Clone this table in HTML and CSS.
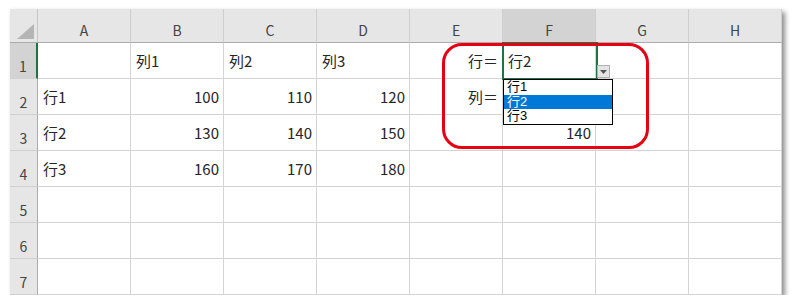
FILE: index.html
```html
<!DOCTYPE html>
<html lang="ja">
<head>
<meta charset="utf-8">
<title>ドロップダウンリスト</title>
<link rel="stylesheet" href="styles.css">
</head>
<body>
<div class="page">
  <div class="sheet">
    <div class="grid">
      <div class="corner"><span class="corner-tri"></span></div>
      <div class="colhead">A</div>
      <div class="colhead">B</div>
      <div class="colhead">C</div>
      <div class="colhead">D</div>
      <div class="colhead">E</div>
      <div class="colhead active">F</div>
      <div class="colhead">G</div>
      <div class="colhead">H</div>

      <div class="rowhead active">1</div>
      <div class="cell"></div>
      <div class="cell">列1</div>
      <div class="cell">列2</div>
      <div class="cell">列3</div>
      <div class="cell num">行＝</div>
      <div class="cell">行2</div>
      <div class="cell"></div>
      <div class="cell"></div>

      <div class="rowhead">2</div>
      <div class="cell">行1</div>
      <div class="cell num">100</div>
      <div class="cell num">110</div>
      <div class="cell num">120</div>
      <div class="cell num">列＝</div>
      <div class="cell"></div>
      <div class="cell"></div>
      <div class="cell"></div>

      <div class="rowhead">3</div>
      <div class="cell">行2</div>
      <div class="cell num">130</div>
      <div class="cell num">140</div>
      <div class="cell num">150</div>
      <div class="cell"></div>
      <div class="cell num">140</div>
      <div class="cell"></div>
      <div class="cell"></div>

      <div class="rowhead">4</div>
      <div class="cell">行3</div>
      <div class="cell num">160</div>
      <div class="cell num">170</div>
      <div class="cell num">180</div>
      <div class="cell"></div>
      <div class="cell"></div>
      <div class="cell"></div>
      <div class="cell"></div>

      <div class="rowhead">5</div>
      <div class="cell"></div><div class="cell"></div><div class="cell"></div><div class="cell"></div>
      <div class="cell"></div><div class="cell"></div><div class="cell"></div><div class="cell"></div>

      <div class="rowhead">6</div>
      <div class="cell"></div><div class="cell"></div><div class="cell"></div><div class="cell"></div>
      <div class="cell"></div><div class="cell"></div><div class="cell"></div><div class="cell"></div>

      <div class="rowhead">7</div>
      <div class="cell"></div><div class="cell"></div><div class="cell"></div><div class="cell"></div>
      <div class="cell"></div><div class="cell"></div><div class="cell"></div><div class="cell"></div>
    </div>

    <!-- active cell F1 -->
    <div class="selection"></div>
    <!-- highlight around the lookup cells -->
    <div class="callout"></div>
    <!-- in-cell dropdown -->
    <div class="dd-button">
      <svg width="7" height="4" viewBox="0 0 7 4"><path d="M0 0H7L3.5 4Z" fill="#555"/></svg>
    </div>
    <ul class="dd-list">
      <li>行1</li>
      <li class="selected">行2</li>
      <li>行3</li>
    </ul>
  </div>
</div>
</body>
</html>
```

FILE: styles.css
```css
* {
  box-sizing: border-box;
}

html, body {
  margin: 0;
  padding: 0;
  background: #ffffff;
}

.page {
  padding: 9px 0 0 10px;
  font-family: "Noto Sans CJK JP", "Noto Sans", sans-serif;
  color: #262626;
}

.sheet {
  position: relative;
  width: 772px;
  height: 286px;
  box-shadow: 3px 3px 5px rgba(0, 0, 0, 0.45);
  background: #fff;
}

.grid {
  display: grid;
  grid-template-columns: 28px repeat(8, 93px);
  grid-template-rows: 34px repeat(7, 36px);
}

.corner {
  background: #e6e6e6;
  border-right: 1px solid #c6c6c6;
  border-bottom: 1px solid #ababab;
  position: relative;
}

.corner-tri {
  position: absolute;
  right: 3px;
  bottom: 3px;
  width: 0;
  height: 0;
  border-left: 17px solid transparent;
  border-bottom: 15px solid #b5b5b5;
}

.colhead {
  background: #e6e6e6;
  border-right: 1px solid #cfcfcf;
  border-bottom: 1px solid #ababab;
  display: flex;
  align-items: center;
  justify-content: center;
  padding-top: 9px;
  font-size: 14px;
  color: #444;
}

.colhead.active {
  background: #d3d3d3;
}

.rowhead {
  background: #e6e6e6;
  border-right: 1px solid #ababab;
  border-bottom: 1px solid #d0d0d0;
  display: flex;
  align-items: flex-end;
  justify-content: center;
  padding-bottom: 3px;
  font-size: 14px;
  color: #444;
  line-height: 18px;
}

.rowhead.active {
  background: #d3d3d3;
  border-right: 2px solid #217346;
}

.cell {
  border-right: 1px solid #d4d4d4;
  border-bottom: 1px solid #d4d4d4;
  display: flex;
  align-items: center;
  padding: 1px 4px 0 5px;
  font-size: 15px;
  line-height: 18px;
  white-space: nowrap;
}

.cell.num {
  justify-content: flex-end;
}

.selection {
  position: absolute;
  left: 492px;
  top: 33px;
  width: 96px;
  height: 38px;
  border: 2px solid #217346;
}

.callout {
  position: absolute;
  left: 432px;
  top: 34px;
  width: 207px;
  height: 106px;
  border: 3px solid #e60012;
  border-radius: 20px;
}

.dd-button {
  position: absolute;
  left: 587px;
  top: 56px;
  width: 13px;
  height: 13px;
  background: #e4e4e4;
  border: 1px solid #b0b0b0;
  display: flex;
  align-items: center;
  justify-content: center;
}

.dd-list {
  position: absolute;
  left: 493px;
  top: 70px;
  width: 110px;
  margin: 0;
  padding: 0;
  list-style: none;
  background: #fff;
  border: 1px solid #000;
  font-family: "Liberation Sans", "Noto Sans CJK JP", sans-serif;
  font-size: 13px;
  color: #000;
}

.dd-list li {
  height: 14.5px;
  line-height: 14.5px;
  padding-left: 3px;
}

.dd-list li.selected {
  background: #0078d7;
  color: #fff;
}
```
